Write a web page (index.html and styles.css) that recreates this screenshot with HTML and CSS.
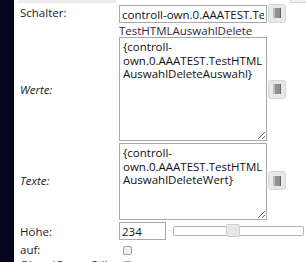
FILE: index.html
```html
<!DOCTYPE html>
<html lang="de">

<head>
  <meta charset="UTF-8" />
  <title>Attribute</title>
  <link rel="stylesheet" href="styles.css">
</head>

<body>
  <div class="side"></div>
  <div class="panel">
    <div class="top-strip">
      <div class="strip-bar"></div>
      <div class="strip-box"></div>
    </div>
    <div class="attrs">
      <div class="label label-top">Schalter:</div>
      <div class="value"><input type="text" class="text-input" value="controll-own.0.AAATEST.TestHTMLAuswahlDelete" /></div>
      <div class="cell-btn"><button class="icon-btn"><svg width="8" height="10" viewBox="0 0 8 10"><rect x="0" y="0" width="8" height="10" fill="#909090" /><rect x="0" y="0" width="2" height="10" fill="#c0c0c0" /><rect x="7" y="0" width="1" height="10" fill="#666" /></svg></button></div>

      <div class="label"></div>
      <div class="value hint">TestHTMLAuswahlDelete</div>
      <div class="cell-btn"></div>

      <div class="label italic">Werte:</div>
      <div class="value"><textarea class="area area-big">{controll-own.0.AAATEST.TestHTMLAuswahlDeleteAuswahl}</textarea></div>
      <div class="cell-btn"><button class="icon-btn"><svg width="8" height="10" viewBox="0 0 8 10"><rect x="0" y="0" width="8" height="10" fill="#909090" /><rect x="0" y="0" width="2" height="10" fill="#c0c0c0" /><rect x="7" y="0" width="1" height="10" fill="#666" /></svg></button></div>

      <div class="label italic">Texte:</div>
      <div class="value"><textarea class="area area-small">{controll-own.0.AAATEST.TestHTMLAuswahlDeleteWert}</textarea></div>
      <div class="cell-btn"><button class="icon-btn"><svg width="8" height="10" viewBox="0 0 8 10"><rect x="0" y="0" width="8" height="10" fill="#909090" /><rect x="0" y="0" width="2" height="10" fill="#c0c0c0" /><rect x="7" y="0" width="1" height="10" fill="#666" /></svg></button></div>

      <div class="label">Höhe:</div>
      <div class="value wide">
        <input type="text" class="text-input num-input" value="234" />
        <div class="slider">
          <span class="slider-handle"></span>
        </div>
      </div>

      <div class="label">auf:</div>
      <div class="value"><input type="checkbox" class="check" /></div>
      <div class="cell-btn"></div>

      <div class="label">Ohne jQuery Stil:</div>
      <div class="value"><input type="checkbox" class="check" /></div>
      <div class="cell-btn"></div>
    </div>
  </div>
</body>

</html>
```

FILE: styles.css
```css
body {
  margin: 0;
  display: flex;
  height: 262px;
  overflow: hidden;
  font-family: "Open Sans", sans-serif;
  font-size: 11.5px;
  color: #222;
  background: #fff;
}

.side {
  width: 14px;
  background-color: #05051f;
}

.panel {
  flex: 1;
  min-width: 0;
  background: #fff;
}

/* bottom of the previous row */
.top-strip {
  display: flex;
  height: 3px;
}

.strip-bar {
  margin-left: 4px;
  width: 98px;
  background: #ececec;
}

.strip-box {
  margin-left: auto;
  width: 16px;
  border-left: 1px solid #d3d3d3;
  border-bottom: 1px solid #d3d3d3;
  background: #f2f2f2;
  box-sizing: border-box;
}

.attrs {
  display: grid;
  grid-template-columns: 105px 149px 1fr;
  align-items: center;
}

.label {
  padding-left: 6px;
  white-space: nowrap;
}

.label-top {
  margin-top: -1px;
}

.italic {
  font-style: italic;
}

.value {
  display: flex;
  align-items: center;
}

.wide {
  grid-column: 2 / 4;
  padding: 2px 0;
}

.text-input {
  width: 148px;
  height: 18px;
  margin: 2px 0 0;
  padding: 0 2px;
  border: 1px solid #a9a9a9;
  box-sizing: border-box;
  font-family: "Open Sans", sans-serif;
  font-size: 11.5px;
  color: #111;
}

.hint {
  height: 14px;
  line-height: 13px;
  color: #33243a;
}

.area {
  width: 148px;
  margin: 0;
  padding: 2px 3px;
  border: 1px solid #a9a9a9;
  box-sizing: border-box;
  font-family: "Open Sans", sans-serif;
  font-size: 11.5px;
  line-height: 13.5px;
  color: #111;
  overflow: hidden;
}

.area-big {
  height: 104px;
}

.area-small {
  height: 77px;
  margin-top: 2px;
}

.icon-btn {
  width: 18px;
  height: 19px;
  padding: 0;
  display: flex;
  align-items: center;
  justify-content: center;
  background: #e8e8e8;
  border: 1px solid #d6d6d6;
  border-radius: 3px;
}

.cell-btn {
  display: flex;
  align-items: center;
}

.num-input {
  width: 47px;
  margin: 0;
}

.slider {
  position: relative;
  margin-left: 7px;
  width: 131px;
  height: 10px;
  border: 1px solid #b4b4b4;
  border-radius: 2px;
  box-sizing: border-box;
  background: #fff;
}

.slider-handle {
  position: absolute;
  left: 52px;
  top: -3px;
  width: 14px;
  height: 13px;
  background: #e6e6e6;
  border: 1px solid #cfcfcf;
  border-radius: 2px;
  box-sizing: border-box;
}

.check {
  appearance: none;
  margin: 2px 0 1px 4px;
  width: 9px;
  height: 9px;
  border: 1px solid #a0a0a0;
  border-radius: 2px;
  background: #f2f2f2;
}
```
